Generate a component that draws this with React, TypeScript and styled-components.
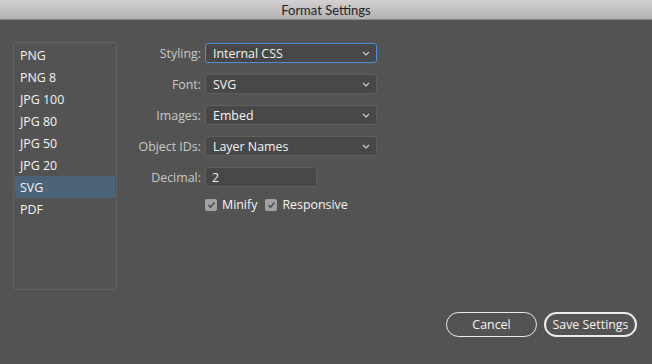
import * as React from 'react'
import styled, { createGlobalStyle } from 'styled-components'

const Global = createGlobalStyle`
  html, body {
    margin: 0;
    padding: 0;
    background: #535353;
  }
  * { box-sizing: border-box; }
`

const Window = styled.div`
  width: 652px;
  height: 364px;
  display: flex;
  flex-direction: column;
  background: #535353;
  font-family: "Open Sans", "Noto Sans", sans-serif;
  font-size: 12.4px;
  font-weight: 500;
  overflow: hidden;
`

const TitleBar = styled.div`
  height: 20px;
  flex: none;
  display: flex;
  align-items: center;
  justify-content: center;
  background: linear-gradient(#d2d0d2, #b3b1b3);
  border-bottom: 1px solid #8c8a8c;
  color: #1e1e1e;
  font-family: "Lato", "Open Sans", sans-serif;
  font-size: 13px;
  font-weight: 400;
`

const Content = styled.div`
  flex: 1;
  display: flex;
  flex-direction: column;
  padding: 22px 15px 27px 13px;
`

const Main = styled.div`
  display: flex;
  align-items: flex-start;
  gap: 4px;
`

const List = styled.ul`
  width: 104px;
  height: 248px;
  margin: 0;
  padding: 1px;
  list-style: none;
  border: 1px solid #636363;
  border-radius: 3px;
`

const Item = styled.li<{ $active?: boolean }>`
  height: 22px;
  display: flex;
  align-items: center;
  padding-left: 5px;
  color: #f6f6f6;
  background: ${p => (p.$active ? '#4a6479' : 'transparent')};
`

const Form = styled.div`
  display: grid;
  grid-template-columns: 80px 172px;
  align-content: start;
  column-gap: 4px;
  row-gap: 11px;
  align-items: center;
  padding-top: 1px;
`

const Label = styled.label`
  text-align: right;
  white-space: nowrap;
  color: #c9c9c9;
`

const Select = styled.div<{ $focus?: boolean }>`
  height: 20px;
  display: flex;
  align-items: center;
  justify-content: space-between;
  padding: 0 6px 0 7px;
  background: #474747;
  border: 1px solid ${p => (p.$focus ? '#4a90dc' : '#5e5e5e')};
  border-radius: 3px;
  color: #f6f6f6;
`

const Input = styled.div`
  width: 112px;
  height: 20px;
  display: flex;
  align-items: center;
  padding-left: 6px;
  background: #474747;
  border: 1px solid #5e5e5e;
  border-radius: 3px;
  color: #f6f6f6;
`

const Checks = styled.div`
  grid-column: 2;
  display: flex;
  gap: 8px;
  margin-top: -2px;
`

const Check = styled.span`
  display: flex;
  align-items: center;
  gap: 5px;
  color: #f6f6f6;
`

const Box = styled.span`
  width: 12px;
  height: 12px;
  border-radius: 2px;
  background: #a3a3a3;
  display: flex;
  align-items: center;
  justify-content: center;
`

const Footer = styled.div`
  margin-top: auto;
  display: flex;
  justify-content: flex-end;
  gap: 7px;
`

const Button = styled.button<{ $primary?: boolean }>`
  height: 25px;
  width: ${p => (p.$primary ? '93px' : '91px')};
  border-radius: 13px;
  border: ${p => (p.$primary ? '2px' : '1px')} solid #ececec;
  background: transparent;
  color: #f6f6f6;
  font-family: inherit;
  font-size: inherit;
  font-weight: inherit;
  padding: 0;
`

const Chevron = () => (
  <svg width="8" height="5" viewBox="0 0 8 5">
    <polyline points="1,1 4,4 7,1" fill="none" stroke="#d0d0d0" strokeWidth="1.2" />
  </svg>
)

const Tick = () => (
  <svg width="9" height="8" viewBox="0 0 9 8">
    <polyline points="1.5,4 3.5,6.2 7.5,1.5" fill="none" stroke="#4e4e4e" strokeWidth="1.6" />
  </svg>
)

const formats = ['PNG', 'PNG 8', 'JPG 100', 'JPG 80', 'JPG 50', 'JPG 20', 'SVG', 'PDF']

const App = () => {
  return (
    <Window>
      <Global />
      <TitleBar>Format Settings</TitleBar>
      <Content>
        <Main>
          <List>
            {formats.map(f => (
              <Item key={f} $active={f === 'SVG'}>{f}</Item>
            ))}
          </List>
          <Form>
            <Label>Styling:</Label>
            <Select $focus>Internal CSS<Chevron /></Select>
            <Label>Font:</Label>
            <Select>SVG<Chevron /></Select>
            <Label>Images:</Label>
            <Select>Embed<Chevron /></Select>
            <Label>Object IDs:</Label>
            <Select>Layer Names<Chevron /></Select>
            <Label>Decimal:</Label>
            <Input>2</Input>
            <Checks>
              <Check><Box><Tick /></Box>Minify</Check>
              <Check><Box><Tick /></Box>Responsive</Check>
            </Checks>
          </Form>
        </Main>
        <Footer>
          <Button>Cancel</Button>
          <Button $primary>Save Settings</Button>
        </Footer>
      </Content>
    </Window>
  )
}

export default App
